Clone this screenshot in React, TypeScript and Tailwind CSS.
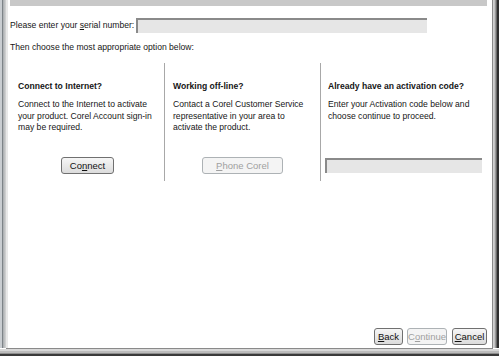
import React from "react";

const font = { fontFamily: '"Liberation Sans", Arial, sans-serif' };

const Btn: React.FC<{ children: React.ReactNode; disabled?: boolean; className?: string }> = ({
  children,
  disabled,
  className,
}) => (
  <button
    disabled={disabled}
    className={
      "h-[17px] rounded-[3px] border text-[9.5px] leading-[15px] " +
      (disabled
        ? "border-[#adb2b5] bg-[#f4f4f4] text-[#a0a0a0] "
        : "border-[#707070] bg-gradient-to-b from-[#f6f6f6] to-[#dcdcdc] text-[#111] ") +
      (className ?? "")
    }
  >
    {children}
  </button>
);

const Field: React.FC<{ className?: string }> = ({ className }) => (
  <div
    className={
      "h-[15px] bg-[#e6e6e6] border-t-2 border-l-2 border-t-[#8a8a8a] border-l-[#8a8a8a] " +
      (className ?? "")
    }
  />
);

export default function App() {
  return (
    <div className="w-[499px] h-[356px] flex flex-col bg-white overflow-hidden text-[#161616]" style={font}>
      <div className="flex flex-1 min-h-0">
        {/* left frame */}
        <div className="w-[8px] flex">
          <div className="w-[2px] bg-[#c9cdd1]" />
          <div className="w-[1px] bg-[#7d8388]" />
          <div className="w-[3px] bg-gradient-to-r from-[#a7abae] to-[#d6d6d6]" />
          <div className="w-[2px] bg-[#e8e8e8]" />
        </div>

        {/* content */}
        <div className="flex-1 flex flex-col text-[8.6px]">
          <div className="ml-[2px] mr-[5px] h-[6px] bg-[#c8c8c8]" />

          <div className="flex items-center mt-[12px] ml-[2px]">
            <span>
              Please enter your <span className="underline">s</span>erial number:
            </span>
            <Field className="ml-[2px] w-[291px]" />
          </div>

          <div className="ml-[2px] mt-[8px] leading-[12px]">Then choose the most appropriate option below:</div>

          <div className="mt-[10px] grid grid-cols-[157px_156px_1fr] h-[118px] leading-[11.5px]">
            <div className="border-r border-r-[#a8a8a8] pl-[10px] pr-[8px] pt-[17px] flex flex-col">
              <div className="font-bold leading-[12px]">Connect to Internet?</div>
              <div className="mt-[7px]">
                Connect to the Internet to activate your product. Corel Account sign-in may be required.
              </div>
              <Btn className="mt-[23px] ml-[43px] w-[53px]">
                Co<span className="underline">n</span>nect
              </Btn>
            </div>
            <div className="border-r border-r-[#a8a8a8] pl-[8px] pr-[8px] pt-[17px] flex flex-col">
              <div className="font-bold leading-[12px]">Working off-line?</div>
              <div className="mt-[7px]">
                Contact a Corel Customer Service representative in your area to activate the product.
              </div>
              <Btn disabled className="mt-[23px] ml-[29px] w-[81px]">
                <span className="underline">P</span>hone Corel
              </Btn>
            </div>
            <div className="pl-[7px] pr-[4px] pt-[17px] flex flex-col">
              <div className="font-bold leading-[12px]">Already have an activation code?</div>
              <div className="mt-[7px]">Enter your Activation code below and choose continue to proceed.</div>
              <Field className="mt-[36px] ml-[-3px] w-[157px]" />
            </div>
          </div>

          <div className="flex-1" />

          <div className="flex justify-end mr-[5px] mb-[3px]">
            <Btn className="w-[29px]">
              <span className="underline">B</span>ack
            </Btn>
            <Btn disabled className="w-[40px] ml-[4px]">
              C<span className="underline">o</span>ntinue
            </Btn>
            <Btn className="w-[35px] ml-[5px]">
              <span className="underline">C</span>ancel
            </Btn>
          </div>
        </div>

        {/* right frame */}
        <div className="w-[7px] flex">
          <div className="w-[1px] bg-[#8a8a8a]" />
          <div className="w-[2px] bg-gradient-to-r from-[#d8d8d8] to-[#bcbcbc]" />
          <div className="w-[1px] bg-[#9a9a9a]" />
          <div className="w-[1px] bg-[#6a6a6a]" />
          <div className="w-[2px] bg-[#2e2e2e]" />
        </div>
      </div>

      {/* bottom frame */}
      <div className="h-[8px] flex flex-col">
        <div className="h-[1px] bg-[#8a8a8a] mx-[6px]" />
        <div className="h-[2px] bg-[#d8d8d8]" />
        <div className="h-[2px] bg-[#bcbcbc]" />
        <div className="h-[1px] bg-[#8e8e8e]" />
        <div className="h-[2px] bg-[#3a3a3a]" />
      </div>
    </div>
  );
}
